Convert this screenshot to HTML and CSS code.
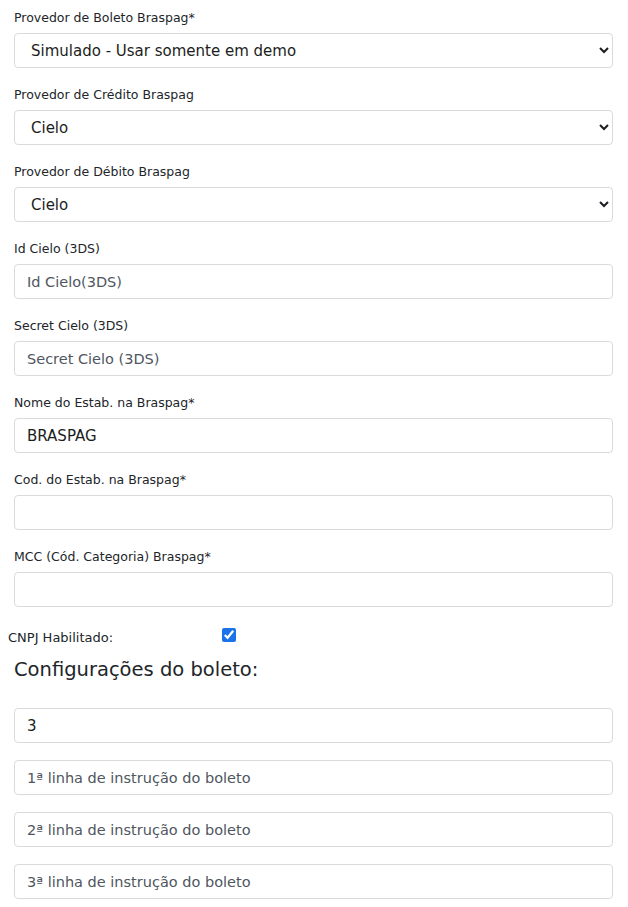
FILE: index.html
```html
<!DOCTYPE html>
<html lang="pt-BR">
<head>
<meta charset="utf-8">
<link rel="stylesheet" href="styles.css">
</head>
<body>
<form class="form">
  <div class="group">
    <label class="lbl">Provedor de Boleto Braspag*</label>
    <select class="ctl sel"><option>Simulado - Usar somente em demo</option></select>
  </div>
  <div class="group">
    <label class="lbl">Provedor de Crédito Braspag</label>
    <select class="ctl sel"><option>Cielo</option></select>
  </div>
  <div class="group">
    <label class="lbl">Provedor de Débito Braspag</label>
    <select class="ctl sel"><option>Cielo</option></select>
  </div>
  <div class="group">
    <label class="lbl">Id Cielo (3DS)</label>
    <input class="ctl" type="text" placeholder="Id Cielo(3DS)">
  </div>
  <div class="group">
    <label class="lbl">Secret Cielo (3DS)</label>
    <input class="ctl" type="text" placeholder="Secret Cielo (3DS)">
  </div>
  <div class="group">
    <label class="lbl">Nome do Estab. na Braspag*</label>
    <input class="ctl" type="text" value="BRASPAG">
  </div>
  <div class="group">
    <label class="lbl">Cod. do Estab. na Braspag*</label>
    <input class="ctl" type="text">
  </div>
  <div class="group">
    <label class="lbl">MCC (Cód. Categoria) Braspag*</label>
    <input class="ctl" type="text">
  </div>
  <div class="check-row">
    <span class="check-lbl">CNPJ Habilitado:</span>
    <input class="chk" type="checkbox" checked>
  </div>
  <h3 class="heading">Configurações do boleto:</h3>
  <div class="stack">
    <input class="ctl" type="text" value="3">
    <input class="ctl" type="text" placeholder="1ª linha de instrução do boleto">
    <input class="ctl" type="text" placeholder="2ª linha de instrução do boleto">
    <input class="ctl" type="text" placeholder="3ª linha de instrução do boleto">
  </div>
</form>
</body>
</html>
```
FILE: styles.css
```css
html, body {
  margin: 0;
  padding: 0;
  background: #fff;
}
body {
  font-family: "DejaVu Sans", "Open Sans", sans-serif;
  color: #212529;
}
.form {
  padding: 8px 15px 0 14px;
}
.group {
  display: flex;
  flex-direction: column;
  margin-bottom: 17px;
}
.lbl {
  font-size: 12.5px;
  line-height: 20px;
  margin-bottom: 5px;
  color: #212529;
}
.ctl {
  box-sizing: border-box;
  width: 100%;
  height: 35px;
  border: 1px solid #d8dbde;
  border-radius: 4px;
  padding: 0 12px;
  font-family: "DejaVu Sans", "Open Sans", sans-serif;
  font-size: 15px;
  color: #1b1e21;
  background: #fff;
  outline: none;
  margin: 0;
}
.ctl::placeholder {
  color: #4f5660;
  font-size: 14.5px;
  opacity: 1;
}
.sel {
  padding: 0 8px 0 12px;
}
.check-row {
  display: flex;
  align-items: center;
  margin-left: -6px;
  height: 22px;
}
.check-lbl {
  width: 214px;
  font-size: 13px;
  margin-top: 4px;
}
.chk {
  margin: 0;
  width: 14px;
  height: 14px;
  accent-color: #1a73e8;
}
.heading {
  margin: 11px 0 25px 0;
  font-size: 19.5px;
  line-height: 26px;
  font-weight: 500;
}
.stack {
  display: flex;
  flex-direction: column;
  gap: 17px;
}
```
